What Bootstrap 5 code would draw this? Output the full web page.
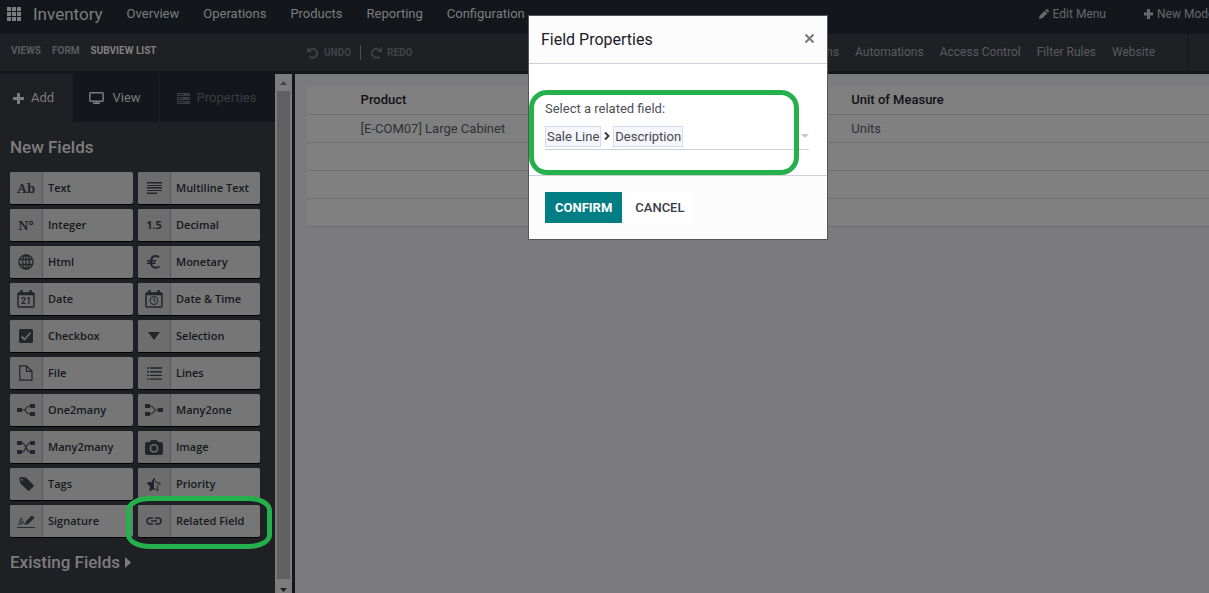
<!DOCTYPE html>
<html lang="en">
<head>
<meta charset="utf-8">
<meta name="viewport" content="width=device-width, initial-scale=1">
<title>Inventory - Studio</title>
<link href="https://cdn.jsdelivr.net/npm/bootstrap@5.3.0/dist/css/bootstrap.min.css" rel="stylesheet">
<style>
body{font:400 13px/20px Roboto,sans-serif;background:#13171c;color:#2a2c31;height:100vh;overflow:hidden}
a{text-decoration:none;color:inherit}
svg{display:block;flex:none}
.top-bar{height:34px;padding:0 0 6px 7px;color:#7c7d7f;background:#13171c}
.app-name{font-size:17px;margin:0 24px 0 12px}
.top-links{gap:24px}
.top-actions{gap:38px;font-size:12px;color:#66686b}
.clip-link{width:65px}
.sub-bar{height:40px;background:#1f2024;border-bottom:3px solid #13161a;color:#595b5e}
.crumbs{width:307px;padding-left:11px;gap:11px;font-size:10px;font-weight:700;padding-bottom:4px}
.crumbs .current{color:#808183}
.history-btn{border:0;background:none;padding:0;font-size:10px;font-weight:700;color:#404246;gap:5px}
.history-sep{width:1px;height:15px;background:#4b4d50;margin:0 9px}
.sub-links{gap:16px;font-size:12px;padding:0 33px 2px 0}
.sub-end{width:21px;border-left:1px solid #131519}
.side{width:275px;background:#1f2024}
.side-content{padding:15px 10px 0}
.tabs-row{height:48px;background:#13171c}
.tab-btn{border:0;background:none;padding:0;color:#7b7c7e;gap:7px;border-right:1px solid #1f2024}
.tab-add{width:73px;background:#1f2024;padding-right:5px}
.tab-view{width:87px;gap:8px;padding-right:2px}
.tab-props{width:115px;color:#3a3d41;border:0;padding-right:2px}
.side-title{font-size:17px;line-height:20px;font-weight:500;color:#7d7d7e;margin:0}
.field-grid{display:grid;grid-template-columns:123px 122px;gap:5px;margin:15px 0}
.field-btn{height:32px;border:0;padding:0;border-radius:2px;background:#767676;color:#15181d;box-shadow:0 1px 0 #000;font:600 11px/20px "Open Sans","Noto Sans",sans-serif;text-align:left;position:relative}
.field-icon{width:33px;height:32px;background:#6d6d6e;border-right:1px solid #5b5b61;border-radius:2px 0 0 2px;margin-right:5px;color:#23252a}
.serif-mark{font:700 13px/20px "Noto Serif","DejaVu Serif","Liberation Serif",serif}
.ring{position:absolute;border:5px solid #24b14c;pointer-events:none}
.ring-field{left:-12px;top:-9px;width:146px;height:53px;border-radius:24px/14px}
.ring-modal{left:0;top:26px;width:270px;height:85px;border-radius:18px}
.scroll-col{width:17px;background:#7c7c7d;margin-right:3px}
.scroll-thumb{width:13px;background:#606060}
.canvas{background:#7b7b7d;padding:12px 0 0 12px;min-width:0}
.list-table{table-layout:fixed;width:100%;border-collapse:separate;border-spacing:0;background:#808080}
.list-table th,.list-table td{height:28px;padding:0 4px;border-bottom:1px solid #707071;white-space:nowrap}
.list-table th{height:29px;font-weight:500;color:#101215}
.list-table td{color:#2f3137}
.c-handle{width:5.5%}.c-product{width:54.4%}.c-unit{width:29.7%}.c-a{width:5.5%}.c-b{width:3.4%}
.prop-dialog{position:absolute;left:529px;top:16px;width:298px;background:#fff;box-shadow:0 0 0 1px #55565a;z-index:5}
.prop-head{height:48px;background:#fcfcfd;border-bottom:1px solid #ced0d8;padding:0 13px 0 12px}
.prop-head h1{font-size:16px;line-height:20px;font-weight:400;color:#1d2026}
.close-btn{border:0;background:none;padding:0 0 3px}
.prop-body{height:112px;padding:35px 16px 0;border-bottom:1px solid #ced0d8;position:relative;color:#4c4f58}
.picker{width:264px;height:27px;border-bottom:1px solid #ced0d3;margin-top:4px;color:#373a43}
.picker-sep{margin:0 3px}
.chip{border:1px solid #d5daea;background:#f5f6fb;padding:0 1px;line-height:19px;height:21px;color:#43464f}
.prop-foot{height:63px;background:#fcfcfd;padding:0 16px}
.prop-foot .btn{height:31px;border:0;border-radius:0;padding:0 10px;font-size:13px;line-height:20px;font-weight:500}
.prop-foot .btn-ok,.btn-ok:hover{background:#017e84;color:#fff;font-weight:700}
.btn-no{background:#fff;color:#383b43;margin-left:3px}
</style>
</head>
<body class="d-flex flex-column">
<nav class="top-bar d-flex align-items-center text-nowrap overflow-hidden" aria-label="Main">
<a href="#" aria-label="Apps"><svg width="14" height="14" fill="#7c7d7f"><path d="M0 0h4v4H0zM5 0h4v4H5zM10 0h4v4h-4zM0 5h4v4H0zM5 5h4v4H5zM10 5h4v4h-4zM0 10h4v4H0zM5 10h4v4H5zM10 10h4v4h-4z"/></svg></a>
<a href="#" class="app-name">Inventory</a>
<div class="top-links d-flex"><a href="#">Overview</a><a href="#">Operations</a><a href="#">Products</a><a href="#">Reporting</a><a href="#">Configuration</a></div>
<div class="top-actions d-flex ms-auto">
<a href="#" class="d-flex align-items-center gap-1"><svg width="10" height="10" viewBox="0 0 11 11" fill="currentColor"><path d="M0 11l.7-3.700L6.200 1.800l3 3L3.700 10.300zM7 1L8 0q.7-.3 1.200.2l1.600 1.600q.4.600 0 1.200l-1 1z"/></svg>Edit Menu</a>
<a href="#" class="clip-link d-flex align-items-center"><svg class="me-1" width="9" height="10" fill="currentColor"><path d="M3 0h3v3.500h3v3H6V10H3V6.500H0v-3h3z"/></svg>New Model</a>
</div>
</nav>
<div class="sub-bar d-flex text-nowrap">
<div class="crumbs d-flex align-items-center"><a href="#">VIEWS</a><a href="#">FORM</a><span class="current">SUBVIEW LIST</span></div>
<div class="d-flex align-items-center">
<button type="button" class="history-btn d-flex align-items-center"><svg width="12" height="12" viewBox="0 0 12 12" fill="none" stroke="currentColor" stroke-width="2"><path d="M2.500 3A4.500 4.500 0 1 1 2.500 9.500"/><path d="M0 0v5h5z" fill="currentColor" stroke="none"/></svg>UNDO</button>
<span class="history-sep"></span>
<button type="button" class="history-btn d-flex align-items-center"><svg width="12" height="12" viewBox="0 0 12 12" fill="none" stroke="currentColor" stroke-width="2"><path d="M9.500 3A4.500 4.500 0 1 0 9.500 9.500"/><path d="M12 0v5H7z" fill="currentColor" stroke="none"/></svg>REDO</button>
</div>
<div class="sub-links d-flex align-items-center ms-auto"><a href="#">Translations</a><a href="#">Automations</a><a href="#">Access Control</a><a href="#">Filter Rules</a><a href="#">Website</a></div>
<div class="sub-end"></div>
</div>
<div class="d-flex flex-grow-1 overflow-hidden">
<aside class="side flex-shrink-0">
<div class="tabs-row d-flex">
<button type="button" class="tab-btn tab-add d-flex align-items-center justify-content-center"><svg width="11" height="11" fill="currentColor"><path d="M4 0h3v4h4v3H7v4H4V7H0V4h4z"/></svg>Add</button>
<button type="button" class="tab-btn tab-view d-flex align-items-center justify-content-center"><svg width="15" height="12" fill="none" stroke="currentColor" stroke-width="1.500"><rect x=".8" y=".8" width="13.400" height="8.400" rx="1"/><path d="M7.500 9v2M4 11.300h7"/></svg>View</button>
<button type="button" class="tab-btn tab-props d-flex align-items-center justify-content-center"><svg width="13" height="11" fill="currentColor"><path d="M0 0h13v3H0zM0 4h13v3H0zM0 8h13v3H0z"/><path d="M1 1.500h6M1 5.500h4M1 9.500h7M11 1.500h1M11 5.500h1M11 9.500h1" stroke="#17191e"/></svg>Properties</button>
</div>
<div class="side-content">
<h2 class="side-title">New Fields</h2>
<div class="field-grid">
<button type="button" class="field-btn d-flex align-items-center"><span class="field-icon serif-mark d-flex align-items-center justify-content-center">Ab</span>Text</button>
<button type="button" class="field-btn d-flex align-items-center"><span class="field-icon d-flex align-items-center justify-content-center"><svg width="15" height="12" fill="currentColor"><path d="M0 0h15v1.500H0zM0 3h15v1H0zM0 5h15v1.500H0zM0 8h15v1H0zM0 10.500h10V12H0z"/></svg></span>Multiline Text</button>
<button type="button" class="field-btn d-flex align-items-center"><span class="field-icon serif-mark d-flex align-items-center justify-content-center">N°</span>Integer</button>
<button type="button" class="field-btn d-flex align-items-center"><span class="field-icon d-flex align-items-center justify-content-center fw-bold">1.5</span>Decimal</button>
<button type="button" class="field-btn d-flex align-items-center"><span class="field-icon d-flex align-items-center justify-content-center"><svg width="16" height="16" fill="none" stroke="currentColor" stroke-width="1.300"><circle cx="8" cy="8" r="7"/><ellipse cx="8" cy="8" rx="3.300" ry="7"/><path d="M1.500 5.500h13M1.500 10.500h13M8 1v14"/></svg></span>Html</button>
<button type="button" class="field-btn d-flex align-items-center"><span class="field-icon d-flex align-items-center justify-content-center"><svg width="14" height="14" fill="none" stroke="currentColor"><path d="M12 2C7-.5 4 2 4 7s3.500 7.500 8.500 4.500" stroke-width="2"/><path d="M0 5.800h9M0 8.300h8.500" stroke-width="1.400"/></svg></span>Monetary</button>
<button type="button" class="field-btn d-flex align-items-center"><span class="field-icon d-flex align-items-center justify-content-center"><svg width="18" height="18" fill="none" stroke="currentColor" stroke-width="1.500"><rect x="1" y="3" width="16" height="14" rx="1"/><path d="M1 4h16M4.500 0v4M13.500 0v4" stroke-width="2.500"/><text x="9" y="14" text-anchor="middle" font-family="Roboto" font-size="9" font-weight="700" fill="currentColor" stroke="none">21</text></svg></span>Date</button>
<button type="button" class="field-btn d-flex align-items-center"><span class="field-icon d-flex align-items-center justify-content-center"><svg width="18" height="18" fill="none" stroke="currentColor" stroke-width="1.500"><rect x="1" y="3" width="16" height="14" rx="1"/><path d="M1 4h16M4.500 0v4M13.500 0v4" stroke-width="2.500"/><circle cx="9" cy="10.500" r="4" stroke-width="1"/><path d="M9 8v3h2" stroke-width="1"/></svg></span>Date &amp; Time</button>
<button type="button" class="field-btn d-flex align-items-center"><span class="field-icon d-flex align-items-center justify-content-center"><svg width="14" height="14"><rect width="14" height="14" rx="1.500" fill="currentColor"/><path d="M2.500 7.500l3 3 6-7" fill="none" stroke="#6d6d6e" stroke-width="1.800"/></svg></span>Checkbox</button>
<button type="button" class="field-btn d-flex align-items-center"><span class="field-icon d-flex align-items-center justify-content-center"><svg width="12" height="8" fill="currentColor"><path d="M0 0h12L6 8z"/></svg></span>Selection</button>
<button type="button" class="field-btn d-flex align-items-center"><span class="field-icon d-flex align-items-center justify-content-center"><svg width="14" height="16" fill="none" stroke="currentColor" stroke-width="1.200"><path d="M.8.8h6.700L13 6.300v8.900H.8zM7.500.8v5.500H13"/></svg></span>File</button>
<button type="button" class="field-btn d-flex align-items-center"><span class="field-icon d-flex align-items-center justify-content-center"><svg width="15" height="13" stroke="currentColor" stroke-width="1.400"><path d="M0 1h2M3 1h12M0 4.700h2M3 4.700h12M0 8.400h2M3 8.400h12M0 12.100h2M3 12.100h12"/></svg></span>Lines</button>
<button type="button" class="field-btn d-flex align-items-center"><span class="field-icon d-flex align-items-center justify-content-center"><svg width="18" height="12" fill="currentColor"><path d="M0 4h5v4H0zM13 0h5v4h-5zM13 8h5v4h-5z"/><path d="M5 6h2c2 0 2-4 6-4M7 6c2 0 2 4 6 4" fill="none" stroke="currentColor" stroke-width="1.200"/></svg></span>One2many</button>
<button type="button" class="field-btn d-flex align-items-center"><span class="field-icon d-flex align-items-center justify-content-center"><svg width="18" height="12" fill="currentColor"><path d="M13 4h5v4h-5zM0 0h5v4H0zM0 8h5v4H0z"/><path d="M13 6h-2C9 6 9 2 5 2M11 6c-2 0-2 4-6 4" fill="none" stroke="currentColor" stroke-width="1.200"/></svg></span>Many2one</button>
<button type="button" class="field-btn d-flex align-items-center"><span class="field-icon d-flex align-items-center justify-content-center"><svg width="18" height="13" fill="currentColor"><path d="M0 0h5v4H0zM0 9h5v4H0zM13 0h5v4h-5zM13 9h5v4h-5z"/><path d="M5 2c4 0 4 9 8 9M5 11c4 0 4-9 8-9" fill="none" stroke="currentColor" stroke-width="1.200"/></svg></span>Many2many</button>
<button type="button" class="field-btn d-flex align-items-center"><span class="field-icon d-flex align-items-center justify-content-center"><svg width="18" height="15"><path d="M2 2h3l1-2h6l1 2h3q2 0 2 2v9q0 2-2 2H2q-2 0-2-2V4q0-2 2-2z" fill="currentColor"/><circle cx="9" cy="8.300" r="3.600" fill="none" stroke="#6d6d6e" stroke-width="1.600"/></svg></span>Image</button>
<button type="button" class="field-btn d-flex align-items-center"><span class="field-icon d-flex align-items-center justify-content-center"><svg width="15" height="14"><path d="M.5 1.500q0-1.500 1.500-1.500l5 .5 7.500 7.500q.5 1 0 1.500l-4 4q-1 .8-1.800 0L1 6z" fill="currentColor"/><circle cx="3" cy="2.700" r="1" fill="#6d6d6e"/></svg></span>Tags</button>
<button type="button" class="field-btn d-flex align-items-center"><span class="field-icon d-flex align-items-center justify-content-center"><svg width="14" height="13"><path d="M7 .5l2 4 4.500.6-3.200 3.200.8 4.400-4.100-2.200-4.100 2.200.8-4.400L.5 5.100 5 4.500z" fill="none" stroke="currentColor"/><path d="M7 0v11l-4.500 2 .6-4.600L0 5l4.800-.7z" fill="currentColor"/></svg></span>Priority</button>
<button type="button" class="field-btn d-flex align-items-center"><span class="field-icon d-flex align-items-center justify-content-center"><svg width="18" height="14" fill="none" stroke="currentColor"><path d="M0 13.500h18M1 11c4-2 5-7 3.500-7S2 10 3.500 10.500 6 7 6.500 7.500 6 10 8 10" stroke-width=".9"/><path d="M8 11l1.200-4L15 1.500l2.500 2.200-6 6z" fill="currentColor" stroke="none"/></svg></span>Signature</button>
<button type="button" class="field-btn d-flex align-items-center"><span class="field-icon d-flex align-items-center justify-content-center"><svg width="16" height="8" fill="none" stroke="currentColor" stroke-width="1.500"><path d="M7 1H4a3 3 0 0 0 0 6h3M9 1h3a3 3 0 0 1 0 6H9M5 4h6"/></svg></span>Related Field<span class="ring ring-field"></span></button>
</div>
<h2 class="side-title d-flex align-items-center">Existing Fields<svg class="ms-1" width="7" height="11" fill="currentColor"><path d="M1 0l6 5.500L1 11z"/></svg></h2>
</div>
</aside>
<div class="scroll-col d-flex flex-column align-items-center flex-shrink-0">
<svg width="17" height="17"><path d="M5 11h7L8.500 7z" fill="#434343"/></svg>
<span class="scroll-thumb flex-grow-1"></span>
<svg width="17" height="14"><path d="M5 9h7l-3.500 4z" fill="#202020"/></svg>
</div>
<main class="canvas flex-grow-1">
<table class="list-table">
<colgroup><col class="c-handle"><col class="c-product"><col class="c-unit"><col class="c-a"><col class="c-b"><col></colgroup>
<thead><tr><th></th><th scope="col">Product</th><th scope="col">Unit of Measure</th><th></th><th></th><th></th></tr></thead>
<tbody>
<tr><td></td><td>[E-COM07] Large Cabinet</td><td>Units</td><td></td><td></td><td></td></tr>
<tr><td></td><td></td><td></td><td></td><td></td><td></td></tr>
<tr><td></td><td></td><td></td><td></td><td></td><td></td></tr>
<tr><td></td><td></td><td></td><td></td><td></td><td></td></tr>
</tbody>
</table>
</main>
</div>
<div class="prop-dialog" role="dialog" aria-labelledby="dlg-title">
<div class="prop-head d-flex align-items-center justify-content-between"><h1 id="dlg-title" class="m-0">Field Properties</h1><button type="button" class="close-btn" aria-label="Close"><svg width="9" height="9" stroke="#777" stroke-width="2"><path d="M.5.5l8 8M8.500.5l-8 8"/></svg></button></div>
<div class="prop-body">
<div>Select a related field:</div>
<div class="picker d-flex align-items-center"><span class="chip">Sale Line</span><svg class="picker-sep" width="6" height="8" fill="none" stroke="currentColor" stroke-width="2"><path d="M1 .5L4.500 4 1 7.500"/></svg><span class="chip">Description</span><svg class="ms-auto" width="8" height="4" fill="#c9c9c9"><path d="M0 0h8L4 4z"/></svg></div>
<span class="ring ring-modal"></span>
</div>
<div class="prop-foot d-flex align-items-center"><button type="button" class="btn btn-ok">CONFIRM</button><button type="button" class="btn btn-no">CANCEL</button></div>
</div>
<script src="https://cdn.jsdelivr.net/npm/bootstrap@5.3.0/dist/js/bootstrap.bundle.min.js"></script>
</body>
</html>
